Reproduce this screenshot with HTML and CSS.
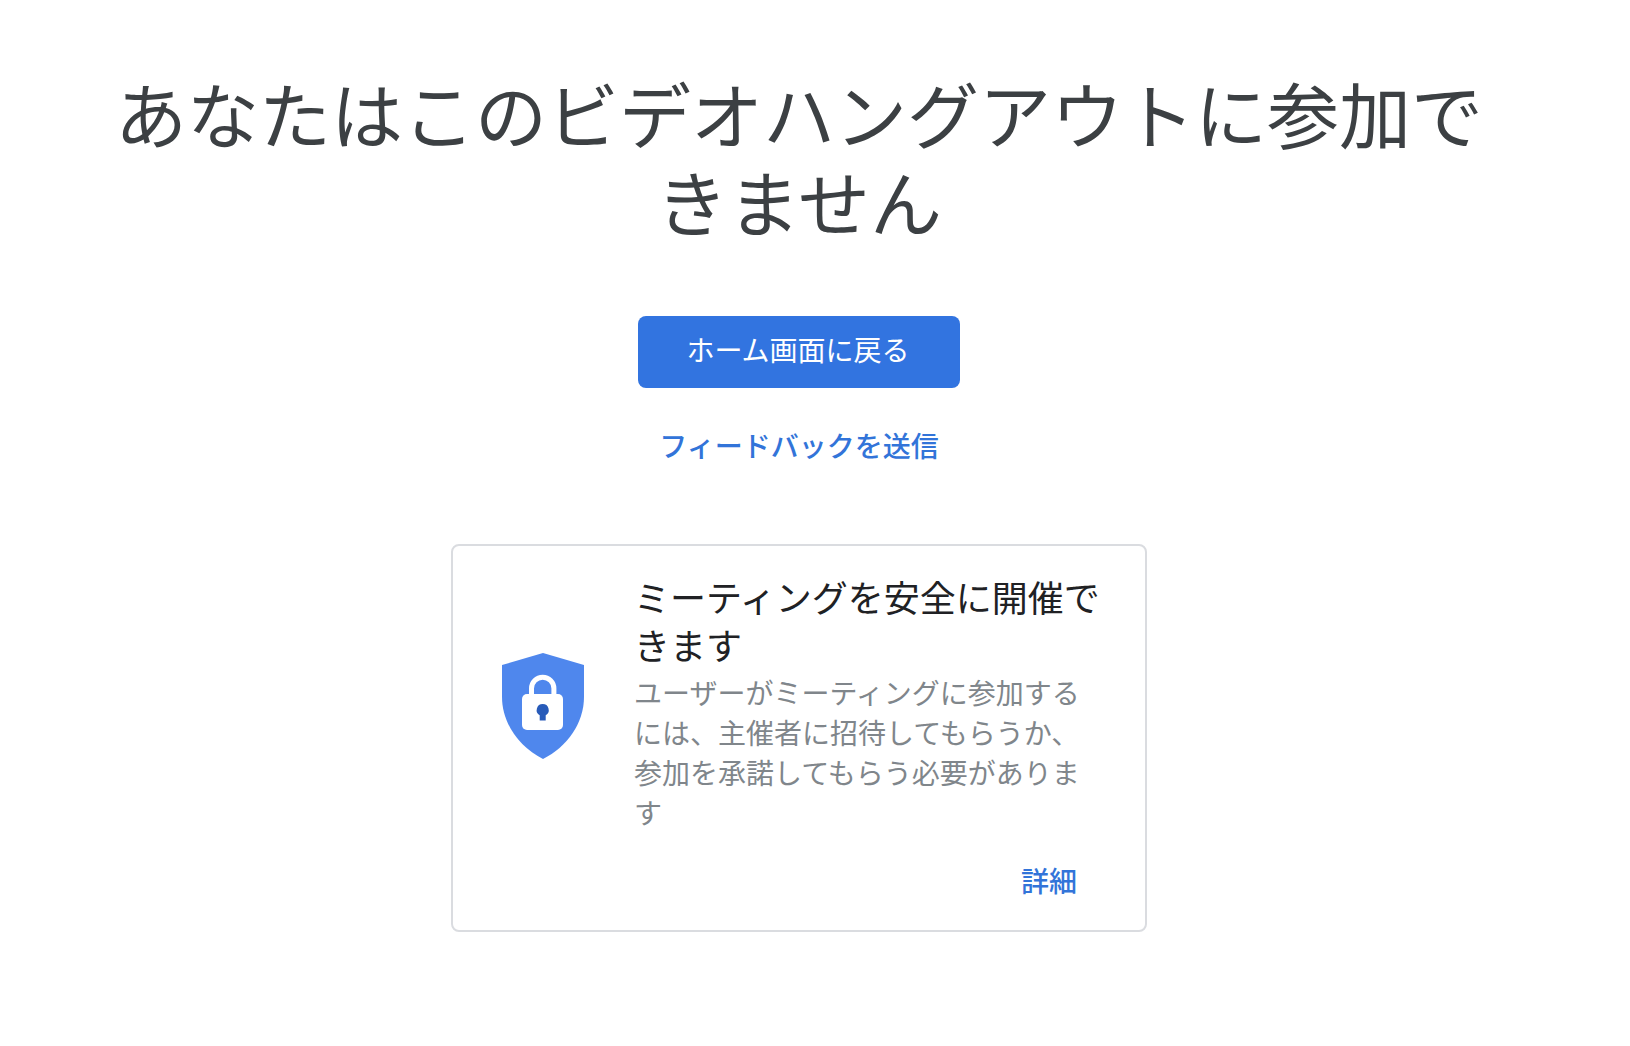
FILE: index.html
```html
<!DOCTYPE html>
<html lang="ja">
<head>
    <meta charset="UTF-8">
    <meta name="viewport" content="width=device-width, initial-scale=1.0">
    <title>ビデオハングアウト</title>
    <link rel="stylesheet" href="styles.css">
</head>
<body>
    <main class="container">
        <h1 class="title">あなたはこのビデオハングアウトに参加できません</h1>

        <div class="actions">
            <button type="button" class="home-button">ホーム画面に戻る</button>
            <a href="#" class="text-link">フィードバックを送信</a>
        </div>

        <section class="card">
            <div class="card-body">
                <svg class="shield" viewBox="0 0 82 106" aria-hidden="true">
                    <path fill="#4f87ed" d="M41 0 82 12V44C82 70 65 94 41 106C17 94 0 70 0 44V12Z"/>
                    <rect fill="#fff" x="20" y="41" width="41" height="36" rx="5"/>
                    <path fill="none" stroke="#fff" stroke-width="5" d="M29.500 43V35.500a11.200 11.200 0 0 1 22.400 0V43"/>
                    <path fill="#285bb9" d="M40.700 51a6 6 0 0 1 3 11.200V67.500h-6V62.200a6 6 0 0 1 3-11.200Z"/>
                </svg>
                <div class="card-text">
                    <h2 class="card-title">ミーティングを安全に開催できます</h2>
                    <p class="card-description">ユーザーがミーティングに参加するには、主催者に招待してもらうか、参加を承諾してもらう必要があります</p>
                </div>
            </div>
            <div class="card-footer">
                <a href="#" class="text-link">詳細</a>
            </div>
        </section>
    </main>
</body>
</html>
```
FILE: styles.css
```css
* {
    margin: 0;
    padding: 0;
    box-sizing: border-box;
}

body {
    font-family: "Noto Sans CJK JP", sans-serif;
    background-color: #fff;
    color: #3c4043;
}

.container {
    display: flex;
    flex-direction: column;
    align-items: center;
    padding: 68px 96px 68px 64px;
}

.title {
    max-width: 1400px;
    font-size: 72px;
    font-weight: 400;
    line-height: 88px;
    text-align: center;
}

.actions {
    display: flex;
    flex-direction: column;
    align-items: center;
    gap: 37px;
    margin-top: 72px;
}

.home-button {
    height: 72px;
    padding: 0 50px 6px 48px;
    border: none;
    border-radius: 8px;
    background-color: #3274e0;
    color: #fff;
    font-family: inherit;
    font-size: 28px;
    font-weight: 400;
    line-height: 40px;
    cursor: pointer;
}

.text-link {
    color: #3274d9;
    font-size: 28px;
    font-weight: 500;
    line-height: 40px;
    text-decoration: none;
}

.card {
    width: 100%;
    max-width: 696px;
    margin-top: 79px;
    padding: 26px 40px 30px 49px;
    border: 2px solid #dadce0;
    border-radius: 8px;
}

.card-body {
    display: flex;
    align-items: center;
    gap: 50px;
}

.shield {
    flex: none;
    width: 82px;
    height: 106px;
    margin-top: 8px;
}

.card-text {
    flex: 1;
}

.card-title {
    color: #202124;
    font-size: 36px;
    font-weight: 400;
    line-height: 48px;
}

.card-description {
    margin-top: 4px;
    color: #80868b;
    font-size: 28px;
    line-height: 40px;
}

.card-footer {
    display: flex;
    justify-content: flex-end;
    margin-top: 28px;
    padding-right: 28px;
}
```
